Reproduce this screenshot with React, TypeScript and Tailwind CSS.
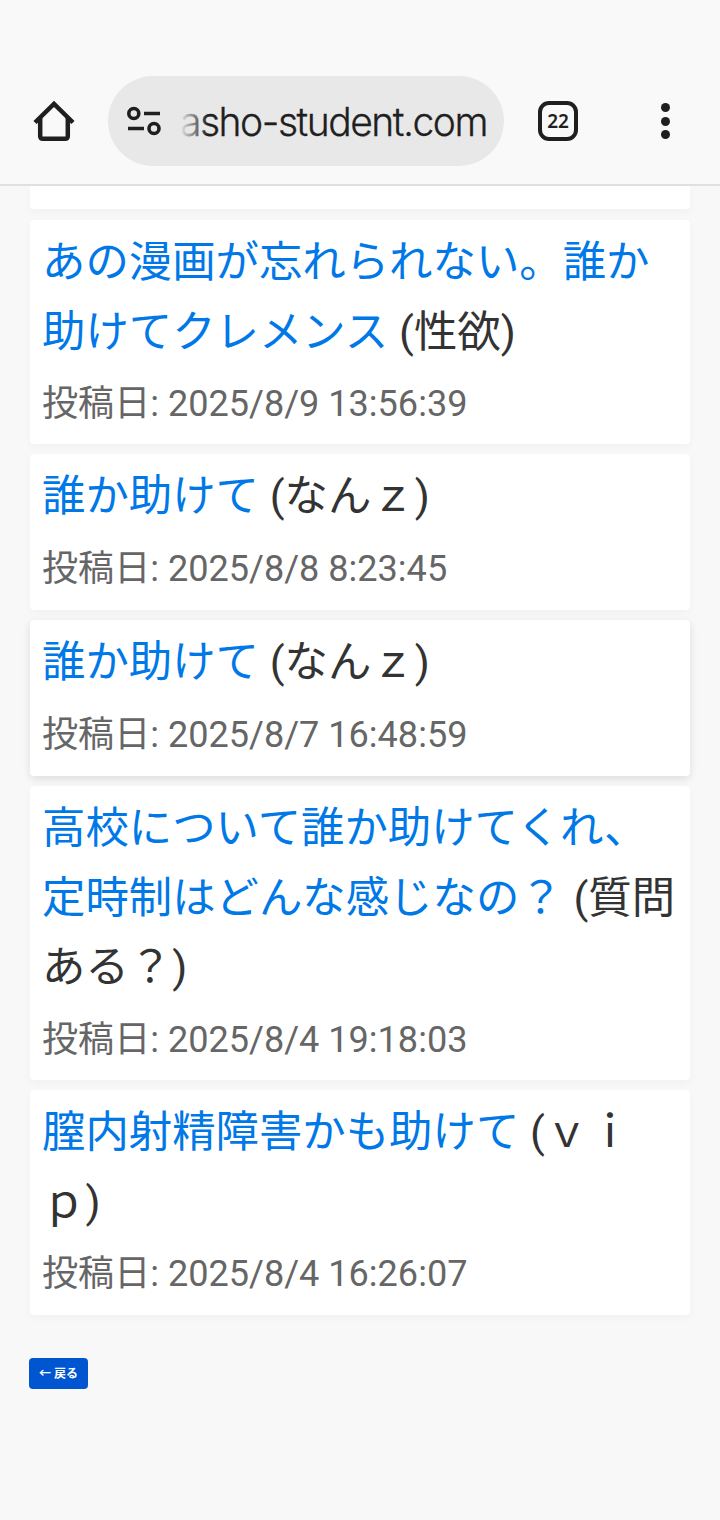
type Post = {
  title: string[];
  board: string[];
  date: string;
  raised?: boolean;
  className: string;
};

const posts: Post[] = [
  {
    title: ['あの漫画が忘れられない。誰か', '助けてクレメンス'],
    board: ['(性欲)'],
    date: '2025/8/9 13:56:39',
    className: 'h-[224px]',
  },
  { title: ['誰か助けて'], board: ['(なんｚ)'], date: '2025/8/8 8:23:45', className: 'h-[156px]' },
  { title: ['誰か助けて'], board: ['(なんｚ)'], date: '2025/8/7 16:48:59', className: 'h-[156px]', raised: true },
  {
    title: ['高校について誰か助けてくれ、', '定時制はどんな感じなの？'],
    board: ['(質問', 'ある？)'],
    date: '2025/8/4 19:18:03',
    className: 'h-[294px]',
  },
  {
    title: ['膣内射精障害かも助けて'],
    board: ['(ｖｉ', 'ｐ)'],
    date: '2025/8/4 16:26:07',
    className: 'h-[225px]',
  },
];

function Lines({ lines }: { lines: string[] }) {
  return (
    <>
      {lines.map((line, i) => (
        <span key={i}>
          {i > 0 && <br />}
          {line}
        </span>
      ))}
    </>
  );
}

function BrowserBar() {
  return (
    <header className="flex h-[186px] items-start border-b-2 border-[#e0e0e0] bg-[#f9f9f9] pt-[76px] text-[#1f1f1f]">
      <svg className="mt-[22px] ml-[32px] h-[46px] w-[44px] shrink-0" viewBox="0 0 44 46" fill="none" stroke="currentColor" strokeWidth="4.5">
        <path d="M3 24.5 22 6 41 24.5" />
        <path d="M8.2 20V38Q8.2 40.8 11 40.8H33Q35.8 40.8 35.8 38V20" />
      </svg>
      <div className="ml-8 flex h-[90px] w-[396px] shrink-0 items-center overflow-hidden rounded-full bg-[#e8e8e8] pl-[19px]">
        <svg className="h-[32px] w-[34px] shrink-0" viewBox="0 0 34 32" fill="none" stroke="currentColor" strokeWidth="3.6">
          <circle cx="6.8" cy="8.5" r="5" />
          <path d="M17 8.5H33M1 23.5H17" />
          <circle cx="27" cy="23.5" r="5" />
        </svg>
        <div className="relative mt-[2px] ml-[19px] whitespace-nowrap font-[Inter,sans-serif] text-[39px] leading-[50px] font-light tracking-[-1.48px] [-webkit-text-stroke:0.3px_#1f1f1f]">
          asho-student.com
          <div className="absolute inset-y-0 left-0 w-[28px] bg-linear-to-r from-[#e8e8e8] to-transparent" />
        </div>
      </div>
      <div className="mt-[25px] ml-[34px] flex h-[40px] w-[40px] shrink-0 items-center justify-center rounded-[11px] border-4 border-current font-['Noto_Sans',sans-serif] text-[19px] font-semibold">
        22
      </div>
      <div className="mt-[27px] ml-[83px] flex flex-col gap-[4.5px]">
        <i className="size-[9px] rounded-full bg-current" />
        <i className="size-[9px] rounded-full bg-current" />
        <i className="size-[9px] rounded-full bg-current" />
      </div>
    </header>
  );
}

function PostCard({ post }: { post: Post }) {
  return (
    <article
      className={`rounded-[4px] bg-white px-3 pt-[8px] ${post.className} ${
        post.raised ? 'shadow-[0_3px_9px_rgba(0,0,0,0.11)]' : 'shadow-[0_3px_9px_rgba(0,0,0,0.03)]'
      }`}
    >
      <h2 className="whitespace-nowrap text-[43.4px] leading-[69.5px] text-[#333]">
        <a href="#" className="text-[#0078e7]">
          <Lines lines={post.title} />
        </a>{' '}
        <Lines lines={post.board} />
      </h2>
      <p className="mt-[12px] text-[36.1px] leading-[50px] text-[#666]">投稿日: {post.date}</p>
    </article>
  );
}

export default function App() {
  return (
    <div className="h-[1520px] w-[720px] overflow-hidden bg-[#f8f8f8] font-[Roboto,'Noto_Sans_CJK_JP',sans-serif]">
      <BrowserBar />
      <main className="px-[30px]">
        <div className="h-[23px] rounded-b-[4px] bg-white shadow-[0_3px_9px_rgba(0,0,0,0.03)]" />
        <div className="mt-[11px] flex flex-col gap-[10px]">
          {posts.map((post, i) => (
            <PostCard key={i} post={post} />
          ))}
        </div>
        <button className="mt-[43px] -ml-px flex h-[31px] w-[59px] items-center justify-center rounded-[4px] bg-[#0055d0] text-[12px] font-bold text-white">
          ← 戻る
        </button>
      </main>
    </div>
  );
}
